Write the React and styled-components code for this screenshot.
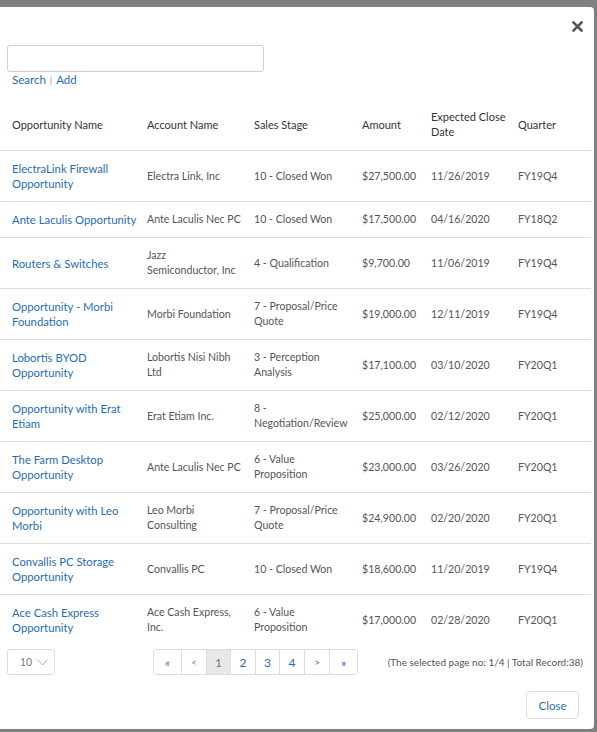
import React from 'react';
import styled, { createGlobalStyle } from 'styled-components';

const GlobalStyle = createGlobalStyle`
  html, body {
    margin: 0;
    padding: 0;
    background: #808080;
    font-family: Lato, "Open Sans", sans-serif;
    overflow: hidden;
  }
`;

const Overlay = styled.div`
  width: 597px;
  height: 732px;
  padding-top: 7px;
  box-sizing: border-box;
`;

const Modal = styled.div`
  width: 594px;
  height: 722px;
  background: #fff;
  border-radius: 0 4px 4px 0;
  display: flex;
  flex-direction: column;
  box-sizing: border-box;
`;

const ModalHeader = styled.div`
  height: 38px;
  display: flex;
  justify-content: flex-end;
  align-items: flex-start;
  padding: 14px 11px 0 0;
  box-sizing: border-box;
`;

const CloseX = styled.button`
  border: 0;
  background: none;
  padding: 0;
  width: 11px;
  height: 11px;
  cursor: pointer;
  display: flex;
`;

const SearchArea = styled.div`
  padding: 0 0 0 7px;
  height: 55px;
`;

const SearchInput = styled.input`
  width: 257px;
  height: 27px;
  box-sizing: border-box;
  border: 1px solid #cfcfcf;
  border-radius: 3px;
  outline: none;
`;

const LinkRow = styled.div`
  display: flex;
  align-items: center;
  gap: 4px;
  padding: 1px 0 0 5px;
  font-size: 11.5px;
  line-height: 14px;
  color: #1f6db3;
  span.sep {
    color: #999;
    font-size: 9px;
  }
`;

const TableWrap = styled.div`
  height: 545px;
  overflow: hidden;
`;

const Table = styled.table`
  width: 591px;
  border-collapse: collapse;
  table-layout: fixed;
  font-size: 11px;
  line-height: 15px;
`;

const Th = styled.th`
  width: ${p => p.$w}px;
  text-align: left;
  font-weight: normal;
  color: #333;
  white-space: pre-line;
  padding: 9px 0 11px ${p => p.$first ? 12 : 5}px;
  vertical-align: middle;
  border-bottom: 1px solid #ddd;
  box-sizing: border-box;
`;

const Tr = styled.tr`
  &:last-child td {
    border-bottom: 0;
  }
`;

const Td = styled.td`
  padding: 10px 0 10px ${p => p.$first ? 12 : 5}px;
  color: ${p => p.$link ? '#1f6db3' : '#555'};
  font-size: ${p => p.$link ? 11.3 : 10.6}px;
  white-space: pre-line;
  border-bottom: 1px solid #ddd;
  vertical-align: middle;
`;

const Footer = styled.div`
  display: flex;
  align-items: center;
  padding: 4px 0 0 7px;
  height: 26px;
`;

const PageSize = styled.div`
  width: 48px;
  height: 26px;
  box-sizing: border-box;
  border: 1px solid #ddd;
  border-radius: 3px;
  display: flex;
  align-items: center;
  padding-left: 12px;
  gap: 5px;
  font-size: 10.5px;
  color: #777;
`;

const Pager = styled.div`
  display: flex;
  margin-left: 98px;
  height: 26px;
  border: 1px solid #ddd;
  border-radius: 3px;
  box-sizing: border-box;
  overflow: hidden;
`;

const PageBtn = styled.div`
  width: ${p => p.$w}px;
  display: flex;
  align-items: center;
  justify-content: center;
  font-size: ${p => p.$small ? 9 : 12}px;
  color: ${p => p.$muted ? '#777' : '#1f6db3'};
  background: ${p => p.$active ? '#e8e8e8' : '#fff'};
  border-left: ${p => p.$firstBtn ? 0 : '1px solid #ddd'};
  box-sizing: border-box;
`;

const RecordInfo = styled.div`
  margin-left: auto;
  margin-right: 11px;
  font-size: 10px;
  color: #555;
`;

const ButtonBar = styled.div`
  display: flex;
  justify-content: flex-end;
  padding: 16px 15px 0 0;
`;

const CloseButton = styled.button`
  width: 53px;
  height: 28px;
  background: #fff;
  border: 1px solid #ddd;
  border-radius: 4px;
  color: #1f6db3;
  font-family: inherit;
  font-size: 11.5px;
  cursor: pointer;
`;

const columns = [
  { label: 'Opportunity Name', w: 142 },
  { label: 'Account Name', w: 107 },
  { label: 'Sales Stage', w: 108 },
  { label: 'Amount', w: 69 },
  { label: 'Expected Close\nDate', w: 87 },
  { label: 'Quarter', w: 78 },
];

const rows = [
  ['ElectraLink Firewall\nOpportunity', 'Electra Link, Inc', '10 - Closed Won', '$27,500.00', '11/26/2019', 'FY19Q4'],
  ['Ante Laculis Opportunity', 'Ante Laculis Nec PC', '10 - Closed Won', '$17,500.00', '04/16/2020', 'FY18Q2'],
  ['Routers & Switches', 'Jazz\nSemiconductor, Inc', '4 - Qualification', '$9,700.00', '11/06/2019', 'FY19Q4'],
  ['Opportunity - Morbi\nFoundation', 'Morbi Foundation', '7 - Proposal/Price\nQuote', '$19,000.00', '12/11/2019', 'FY19Q4'],
  ['Lobortis BYOD\nOpportunity', 'Lobortis Nisi Nibh\nLtd', '3 - Perception\nAnalysis', '$17,100.00', '03/10/2020', 'FY20Q1'],
  ['Opportunity with Erat\nEtiam', 'Erat Etiam Inc.', '8 -\nNegotiation/Review', '$25,000.00', '02/12/2020', 'FY20Q1'],
  ['The Farm Desktop\nOpportunity', 'Ante Laculis Nec PC', '6 - Value\nProposition', '$23,000.00', '03/26/2020', 'FY20Q1'],
  ['Opportunity with Leo\nMorbi', 'Leo Morbi\nConsulting', '7 - Proposal/Price\nQuote', '$24,900.00', '02/20/2020', 'FY20Q1'],
  ['Convallis PC Storage\nOpportunity', 'Convallis PC', '10 - Closed Won', '$18,600.00', '11/20/2019', 'FY19Q4'],
  ['Ace Cash Express\nOpportunity', 'Ace Cash Express,\nInc.', '6 - Value\nProposition', '$17,000.00', '02/28/2020', 'FY20Q1'],
];

const pages = [
  { t: '«', w: 27, muted: true },
  { t: '<', w: 25, muted: true, small: true },
  { t: '1', w: 24, muted: true, active: true },
  { t: '2', w: 25 },
  { t: '3', w: 24 },
  { t: '4', w: 25 },
  { t: '>', w: 25, small: true },
  { t: '»', w: 28 },
];

const App = () => {
  return (
    <Overlay>
      <GlobalStyle />
      <Modal>
        <ModalHeader>
          <CloseX aria-label="close">
            <svg width="11" height="11" viewBox="0 0 11 11">
              <path d="M1.5 1.5 L9.5 9.5 M9.5 1.5 L1.5 9.5" stroke="#555" strokeWidth="2.6" strokeLinecap="square" />
            </svg>
          </CloseX>
        </ModalHeader>
        <SearchArea>
          <SearchInput />
          <LinkRow>
            <span>Search</span><span className="sep">|</span><span>Add</span>
          </LinkRow>
        </SearchArea>
        <TableWrap>
          <Table>
            <thead>
              <tr>
                {columns.map((c, i) => (
                  <Th key={c.label} $w={c.w} $first={i === 0}>{c.label}</Th>
                ))}
              </tr>
            </thead>
            <tbody>
              {rows.map((r, i) => (
                <Tr key={i}>
                  {r.map((v, j) => (
                    <Td key={j} $first={j === 0} $link={j === 0}>{v}</Td>
                  ))}
                </Tr>
              ))}
            </tbody>
          </Table>
        </TableWrap>
        <Footer>
          <PageSize>
            <span>10</span>
            <svg width="11" height="7" viewBox="0 0 11 7">
              <path d="M0.5 0.5 L5.5 6 L10.5 0.5" fill="none" stroke="#999" strokeWidth="0.8" />
            </svg>
          </PageSize>
          <Pager>
            {pages.map((p, i) => (
              <PageBtn key={i} $w={p.w} $muted={p.muted} $active={p.active} $small={p.small} $firstBtn={i === 0}>
                {p.t}
              </PageBtn>
            ))}
          </Pager>
          <RecordInfo>(The selected page no: 1/4 | Total Record:38)</RecordInfo>
        </Footer>
        <ButtonBar>
          <CloseButton>Close</CloseButton>
        </ButtonBar>
      </Modal>
    </Overlay>
  );
};

export default App;
